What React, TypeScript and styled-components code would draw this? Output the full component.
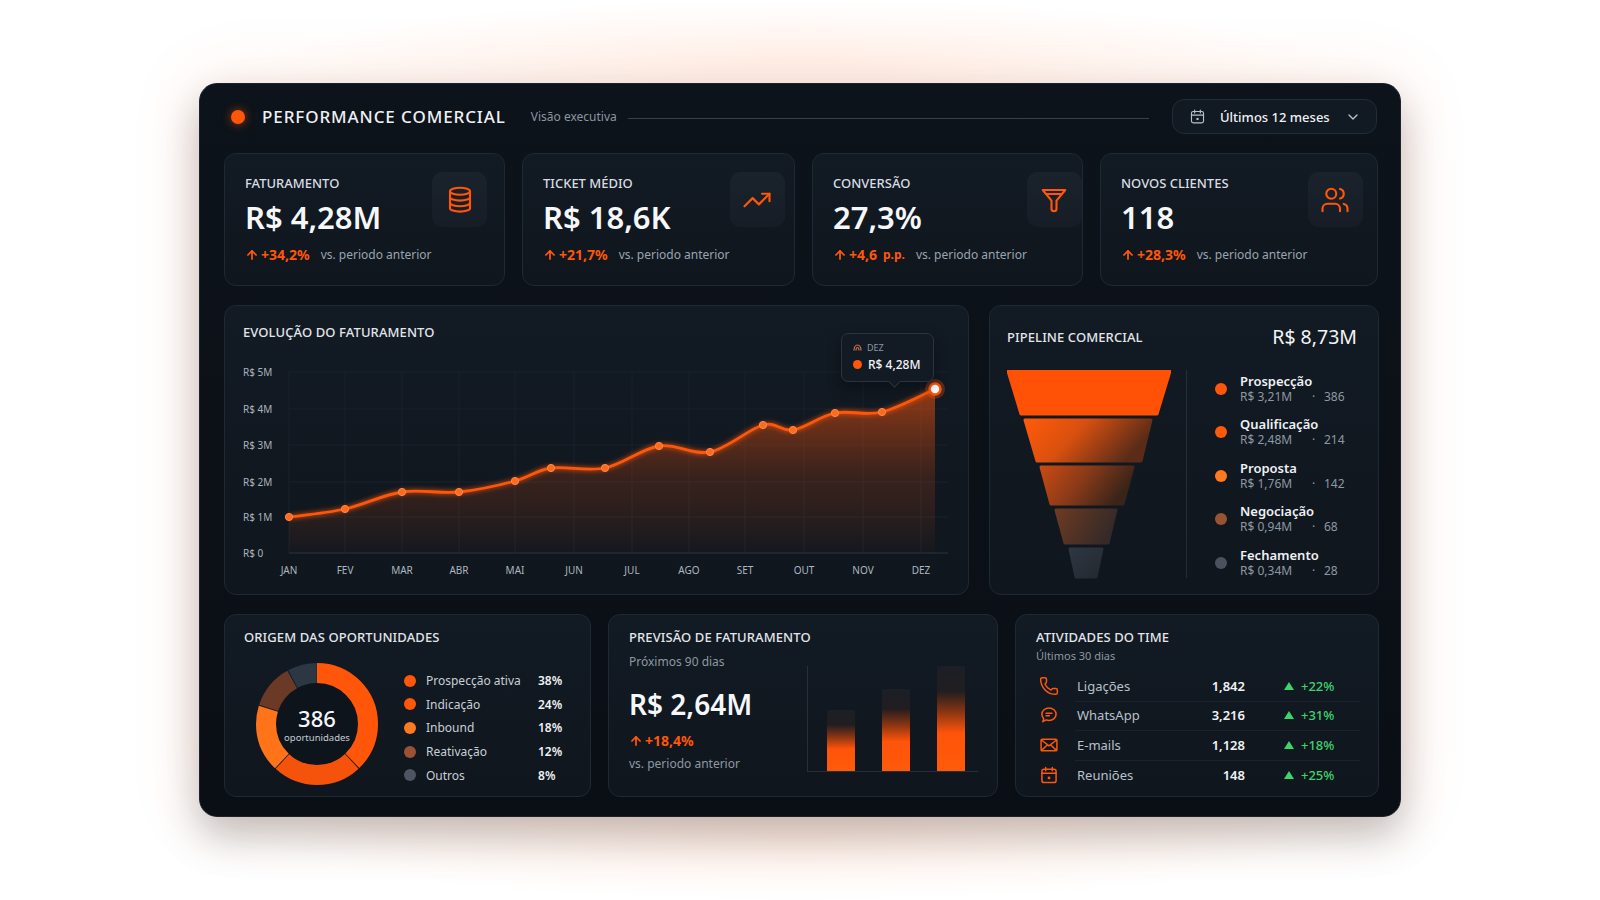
import React from "react";
import styled, { createGlobalStyle } from "styled-components";
import { TrendingUp, Users, ChevronDown, ArrowUp, Phone } from "lucide-react";

const ORANGE = "#ff560a";

const GlobalStyle = createGlobalStyle`
  * { box-sizing: border-box; }
  html, body { margin: 0; padding: 0; background: #ffffff; }
  body {
    font-family: "Noto Sans", "Open Sans", "Liberation Sans", sans-serif;
    -webkit-font-smoothing: antialiased;
  }
`;

const Page = styled.div`
  width: 1600px;
  height: 900px;
  display: flex;
  align-items: center;
  justify-content: center;
  overflow: hidden;
  background: radial-gradient(ellipse 760px 90px at 50% 62px, rgba(255, 150, 100, 0.13), transparent 70%),
    radial-gradient(ellipse 760px 90px at 50% 838px, rgba(255, 150, 100, 0.13), transparent 70%),
    #ffffff;
`;

const Panel = styled.main`
  width: 1202px;
  height: 734px;
  border-radius: 18px;
  border: 1px solid #1b222b;
  background: linear-gradient(180deg, #0d131a 0%, #0a0f15 100%);
  box-shadow: 0 0 70px rgba(255, 110, 50, 0.14), 0 18px 40px rgba(0, 0, 0, 0.25);
  padding: 15px 23px 20px 24px;
  display: flex;
  flex-direction: column;
  gap: 19px;
`;

/* ---------- header ---------- */
const Header = styled.header`
  display: flex;
  align-items: center;
  height: 35px;
  padding-left: 7px;
`;

const LiveDot = styled.span`
  width: 14px;
  height: 14px;
  border-radius: 50%;
  background: ${ORANGE};
  box-shadow: 0 0 10px rgba(255, 86, 10, 0.6);
  margin-right: 17px;
  flex-shrink: 0;
`;

const Title = styled.h1`
  margin: 0;
  font-size: 17px;
  font-weight: 500;
  letter-spacing: 0.9px;
  color: #eef1f4;
  white-space: nowrap;
`;

const Caption = styled.span`
  margin-left: 25px;
  font-size: 12px;
  color: #8b96a2;
  white-space: nowrap;
`;

const Rule = styled.div`
  flex: 1;
  height: 1px;
  background: #36414d;
  margin: 4px 23px 0 11px;
`;

const RangePicker = styled.button`
  width: 205px;
  height: 35px;
  border-radius: 12px;
  border: 1px solid #222d3a;
  background: #111922;
  display: flex;
  align-items: center;
  padding: 0 15px 0 16px;
  gap: 14px;
  color: #eef1f4;
  font: 500 13px "Noto Sans", sans-serif;
  span { flex: 1; text-align: left; }
`;

/* ---------- cards ---------- */
const Card = styled.div`
  position: relative;
  background: linear-gradient(180deg, #121a23 0%, #0f161e 100%);
  border: 1px solid #1e2934;
  border-radius: 12px;
`;

const CardTitle = styled.div`
  font-size: 13px;
  line-height: 18px;
  font-weight: 500;
  color: #e2e6ea;
  letter-spacing: 0.1px;
  white-space: nowrap;
`;

const Muted = styled.div<{ $size?: number }>`
  font-size: ${(p) => p.$size ?? 12}px;
  line-height: 16px;
  color: #8e98a3;
  white-space: nowrap;
`;

/* ---------- KPI row ---------- */
const KpiGrid = styled.section`
  display: grid;
  grid-template-columns: 281px 273px 271px 278px;
  gap: 17px;
  height: 133px;
`;

const KpiCard = styled(Card)`
  display: flex;
  justify-content: space-between;
  padding: 20px 17px 0 20px;
`;

const KpiLabel = styled.div`
  font-size: 13px;
  line-height: 18px;
  font-weight: 500;
  color: #d8dde3;
`;

const KpiValue = styled.div`
  margin-top: 6px;
  font-size: 31px;
  line-height: 38px;
  font-weight: 600;
  color: #f5f7fa;
`;

const KpiDelta = styled.div`
  margin-top: 9px;
  display: flex;
  align-items: center;
  font-size: 12px;
  line-height: 20px;
  color: #9aa4af;
  white-space: nowrap;
`;

const DeltaValue = styled.span`
  display: inline-flex;
  align-items: center;
  gap: 2px;
  color: ${ORANGE};
  font-weight: 700;
  font-size: 14px;
  margin-right: 11px;
  small { font-size: 12px; margin-left: 4px; }
`;

const IconBox = styled.div`
  width: 55px;
  height: 55px;
  margin-top: -2px;
  border-radius: 11px;
  background: linear-gradient(180deg, #1a222c, #161d26);
  display: flex;
  align-items: center;
  justify-content: center;
  color: ${ORANGE};
  flex-shrink: 0;
`;

/* ---------- middle row ---------- */
const MiddleRow = styled.section`
  display: grid;
  grid-template-columns: 745px 390px;
  gap: 20px;
  height: 291px;
`;

const ChartCard = styled(Card)`
  padding: 17px 20px 0 18px;
`;

const ChartSvg = styled.svg`
  display: block;
  margin-top: 11px;
  overflow: visible;
`;

const Tooltip = styled.div`
  position: absolute;
  left: 616px;
  top: 27px;
  width: 93px;
  height: 49px;
  border-radius: 7px;
  background: #121a23;
  border: 1px solid #2a3440;
  padding: 7px 0 0 11px;
  box-shadow: 0 6px 14px rgba(0, 0, 0, 0.35);
  &::after {
    content: "";
    position: absolute;
    left: 48px;
    bottom: -5px;
    width: 8px;
    height: 8px;
    background: #121a23;
    border-right: 1px solid #2a3440;
    border-bottom: 1px solid #2a3440;
    transform: rotate(45deg);
  }
`;

const TipMonth = styled.div`
  display: flex;
  align-items: center;
  gap: 5px;
  font-size: 9px;
  line-height: 13px;
  color: #8c96a1;
`;

const TipValue = styled.div`
  display: flex;
  align-items: center;
  gap: 6px;
  margin-top: 2px;
  font-size: 12px;
  line-height: 18px;
  font-weight: 500;
  color: #f2f4f7;
  &::before {
    content: "";
    width: 9px;
    height: 9px;
    border-radius: 50%;
    background: ${ORANGE};
  }
`;

const PipelineCard = styled(Card)`
  padding: 15px 21px 0 17px;
`;

const PipelineHead = styled.div`
  display: flex;
  justify-content: space-between;
  align-items: center;
  height: 32px;
`;

const PipelineTotal = styled.div`
  font-size: 19.5px;
  font-weight: 400;
  color: #f2f4f7;
`;

const PipelineBody = styled.div`
  display: flex;
  margin-top: 17px;
`;

const Divider = styled.div`
  width: 1px;
  height: 208px;
  background: #242e39;
  margin: 0 28px 0 15px;
`;

const StageList = styled.ul`
  list-style: none;
  margin: 0;
  padding: 3px 0 0;
  display: flex;
  flex-direction: column;
  gap: 11.5px;
`;

const StageItem = styled.li`
  display: grid;
  grid-template-columns: 12px 1fr;
  column-gap: 13px;
  align-items: center;
`;

const Bullet = styled.span<{ $color: string }>`
  width: 12px;
  height: 12px;
  border-radius: 50%;
  background: ${(p) => p.$color};
`;

const StageName = styled.div`
  font-size: 13px;
  line-height: 16px;
  font-weight: 600;
  color: #eef1f4;
`;

const StageValue = styled.div`
  display: grid;
  grid-template-columns: 72px 12px auto;
  font-size: 12px;
  line-height: 16px;
  color: #8e98a3;
`;

/* ---------- bottom row ---------- */
const BottomRow = styled.section`
  display: grid;
  grid-template-columns: 367px 390px 364px;
  gap: 17px;
  height: 182px;
`;

const OriginCard = styled(Card)`
  padding: 13px 20px 0 19px;
`;

const OriginBody = styled.div`
  display: flex;
  align-items: flex-start;
  margin-top: 17px;
  padding-left: 12px;
`;

const Donut = styled.div`
  display: grid;
  width: 122px;
  height: 122px;
  flex-shrink: 0;
  & > * { grid-area: 1 / 1; }
`;

const DonutCenter = styled.div`
  display: flex;
  flex-direction: column;
  align-items: center;
  justify-content: center;
  strong { font-size: 22px; line-height: 26px; font-weight: 500; color: #f5f7fa; }
  span { font-size: 9.5px; line-height: 13px; color: #c6ccd3; }
`;

const OriginList = styled.ul`
  list-style: none;
  margin: 6px 0 0 26px;
  padding: 0;
  width: 160px;
`;

const OriginItem = styled.li`
  display: grid;
  grid-template-columns: 12px 1fr auto;
  column-gap: 10px;
  align-items: center;
  height: 23.6px;
  font-size: 12px;
  color: #c9cfd6;
  b { font-weight: 600; color: #eef1f4; width: 26px; }
`;

const ForecastCard = styled(Card)`
  display: flex;
  padding: 13px 19px 24px 20px;
`;

const ForecastStats = styled.div`
  flex: 0 0 178px;
  min-width: 0;
`;

const ForecastValue = styled.div`
  margin-top: 17px;
  font-size: 28px;
  line-height: 34px;
  font-weight: 600;
  color: #f5f7fa;
`;

const ForecastDelta = styled(DeltaValue)`
  margin-top: 10px;
  line-height: 20px;
  display: flex;
`;

const BarChart = styled.div`
  align-self: flex-end;
  width: 173px;
  height: 106px;
  border-left: 1px solid #25303b;
  border-bottom: 1px solid #25303b;
  display: flex;
  align-items: flex-end;
  gap: 27px;
  padding-left: 19px;
`;

const Bar = styled.div<{ $h: number }>`
  width: 28px;
  height: ${(p) => p.$h}px;
  border-radius: 2px 2px 0 0;
  background: linear-gradient(
    180deg,
    #1b1f27 0%,
    #211d1f 24%,
    #8a3512 44%,
    #ff540a 64%,
    #ff5a0a 100%
  );
`;

const ActivityCard = styled(Card)`
  padding: 13px 20px 0 20px;
`;

const ActivityList = styled.div`
  margin-top: 7px;
`;

const ActivityRow = styled.div<{ $divided?: boolean }>`
  position: relative;
  display: grid;
  grid-template-columns: 41px 109px 59px 1fr;
  align-items: center;
  height: 29.6px;
  font-size: 13px;
  &::before {
    content: "";
    display: ${(p) => (p.$divided ? "block" : "none")};
    position: absolute;
    left: 39px;
    right: -2px;
    top: 0;
    height: 1px;
    background: #1a232d;
  }
`;

const ActivityIcon = styled.span`
  display: flex;
  margin-left: 3px;
  color: ${ORANGE};
`;

const ActivityLabel = styled.span`
  color: #b8c0c9;
`;

const ActivityCount = styled.span`
  text-align: right;
  font-weight: 600;
  color: #f1f3f6;
`;

const ActivityTrend = styled.span`
  display: flex;
  align-items: center;
  gap: 7px;
  padding-left: 39px;
  color: #3fd36b;
  font-weight: 500;
`;

/* ---------- icons ---------- */
type IconProps = { size?: number; color?: string; sw?: number };

const DatabaseIcon = ({ size = 30 }: IconProps) => (
  <svg width={size} height={size} viewBox="0 0 24 24" fill="none" stroke="currentColor" strokeWidth={1.7} strokeLinecap="round">
    <ellipse cx="12" cy="5" rx="8" ry="2.8" />
    <path d="M4 5v13.5c0 1.55 3.6 2.8 8 2.8s8-1.25 8-2.8V5" />
    <path d="M4 9.7c0 1.55 3.6 2.8 8 2.8s8-1.25 8-2.8" />
    <path d="M4 14.2c0 1.55 3.6 2.8 8 2.8s8-1.25 8-2.8" />
  </svg>
);

const FunnelIcon = ({ size = 30 }: IconProps) => (
  <svg width={size} height={size} viewBox="0 0 24 24" fill="none" stroke="currentColor" strokeWidth={1.7} strokeLinejoin="round" strokeLinecap="round">
    <path d="M3 4h18l-7 8.5V19a2 2 0 0 1-4 0v-6.5L3 4z" />
    <path d="M5.6 7.2h12.8" />
  </svg>
);

const CalendarIcon = ({ size = 20, color = "currentColor", sw = 1.8 }: IconProps) => (
  <svg width={size} height={size} viewBox="0 0 24 24" fill="none" stroke={color} strokeWidth={sw} strokeLinecap="round">
    <rect x="3.5" y="5" width="17" height="16" rx="2.5" />
    <path d="M8 3v4M16 3v4M3.5 10h17" />
    <rect x="10.5" y="14" width="3" height="3" fill={color} stroke="none" />
  </svg>
);

const ChatIcon = ({ size = 20 }: IconProps) => (
  <svg width={size} height={size} viewBox="0 0 24 24" fill="none" stroke="currentColor" strokeWidth={1.8} strokeLinejoin="round" strokeLinecap="round">
    <path d="M12 3.5c4.7 0 8.5 3.3 8.5 7.5s-3.8 7.5-8.5 7.5c-1.2 0-2.3-.2-3.3-.6L4.5 20l1.2-3.6C4.3 15 3.5 13.1 3.5 11c0-4.2 3.8-7.5 8.5-7.5z" />
    <path d="M8.5 10h7M8.5 13h4" />
  </svg>
);

const MailIcon = ({ size = 20 }: IconProps) => (
  <svg width={size} height={size} viewBox="0 0 24 24" fill="none" stroke="currentColor" strokeWidth={1.8} strokeLinejoin="round" strokeLinecap="round">
    <rect x="2.5" y="5" width="19" height="14" rx="1.5" />
    <path d="M3 6l9 7 9-7M3 18.5l7-6.5M21 18.5l-7-6.5" />
  </svg>
);

const Triangle = () => (
  <svg width="10" height="8" viewBox="0 0 10 8">
    <path d="M5 0L10 8H0z" fill="#3fd36b" />
  </svg>
);

/* ---------- data ---------- */
const kpis = [
  { label: "FATURAMENTO", value: "R$ 4,28M", delta: "+34,2%", icon: <DatabaseIcon /> },
  { label: "TICKET MÉDIO", value: "R$ 18,6K", delta: "+21,7%", icon: <TrendingUp size={30} strokeWidth={1.7} /> },
  { label: "CONVERSÃO", value: "27,3%", delta: "+4,6", unit: "p.p.", icon: <FunnelIcon /> },
  { label: "NOVOS CLIENTES", value: "118", delta: "+28,3%", icon: <Users size={30} strokeWidth={1.7} /> },
];

type Pt = [number, number];
const points: Pt[] = [
  [46, 165], [102, 157], [159, 140], [216, 140], [272, 129], [308, 116], [362, 116],
  [416, 94], [467, 100], [520, 73], [550, 78], [592, 61], [639, 60], [692, 37],
];
const yTicks = [
  { label: "R$ 5M", y: 20 }, { label: "R$ 4M", y: 57 }, { label: "R$ 3M", y: 93 },
  { label: "R$ 2M", y: 130 }, { label: "R$ 1M", y: 165 }, { label: "R$ 0", y: 201 },
];
const months: [string, number][] = [
  ["JAN", 46], ["FEV", 102], ["MAR", 159], ["ABR", 216], ["MAI", 272], ["JUN", 331],
  ["JUL", 389], ["AGO", 446], ["SET", 502], ["OUT", 561], ["NOV", 620], ["DEZ", 678],
];

const stages = [
  { name: "Prospecção", value: "R$ 3,21M", count: 386, color: "#ff560a" },
  { name: "Qualificação", value: "R$ 2,48M", count: 214, color: "#ff5a0c" },
  { name: "Proposta", value: "R$ 1,76M", count: 142, color: "#ff7a1f" },
  { name: "Negociação", value: "R$ 0,94M", count: 68, color: "#9a5233" },
  { name: "Fechamento", value: "R$ 0,34M", count: 28, color: "#4a525d" },
];

const funnel = [
  { d: "M1 1H163L150 44H14Z", fill: "#ff5207" },
  { d: "M18 50H144L134 91H30Z", fill: "url(#seg2)" },
  { d: "M34 97H126L116 134H44Z", fill: "url(#seg3)" },
  { d: "M49 140H109L101 173H58Z", fill: "url(#seg4)" },
  { d: "M63 179H95L89 207H69Z", fill: "url(#seg5)" },
];

const origins = [
  { name: "Prospecção ativa", pct: 38, color: "#ff560a", ring: "#ff560a" },
  { name: "Indicação", pct: 24, color: "#ff560a", ring: "#f5520b" },
  { name: "Inbound", pct: 18, color: "#ff7a1f", ring: "#ff7418" },
  { name: "Reativação", pct: 12, color: "#9a5233", ring: "#6b3a27" },
  { name: "Outros", pct: 8, color: "#4c5561", ring: "#2c3744" },
];

const activities = [
  { label: "Ligações", count: "1,842", delta: "+22%", icon: <Phone size={20} strokeWidth={1.8} /> },
  { label: "WhatsApp", count: "3,216", delta: "+31%", icon: <ChatIcon /> },
  { label: "E-mails", count: "1,128", delta: "+18%", icon: <MailIcon /> },
  { label: "Reuniões", count: "148", delta: "+25%", icon: <CalendarIcon /> },
];

const smoothPath = (pts: Pt[]) => {
  let d = `M${pts[0][0]},${pts[0][1]}`;
  for (let i = 0; i < pts.length - 1; i++) {
    const p0 = pts[i - 1] || pts[i];
    const p1 = pts[i];
    const p2 = pts[i + 1];
    const p3 = pts[i + 2] || p2;
    const c1x = p1[0] + (p2[0] - p0[0]) / 6;
    const c1y = p1[1] + (p2[1] - p0[1]) / 6;
    const c2x = p2[0] - (p3[0] - p1[0]) / 6;
    const c2y = p2[1] - (p3[1] - p1[1]) / 6;
    d += ` C${c1x.toFixed(1)},${c1y.toFixed(1)} ${c2x.toFixed(1)},${c2y.toFixed(1)} ${p2[0]},${p2[1]}`;
  }
  return d;
};

/* ---------- parts ---------- */
const RevenueChart = () => {
  const line = smoothPath(points);
  const last = points[points.length - 1];
  const area = `${line} L${last[0]},201 L46,201 Z`;
  return (
    <ChartSvg width={705} height={235} viewBox="0 0 705 235">
      <defs>
        <linearGradient id="areaFill" x1="0" y1="37" x2="0" y2="201" gradientUnits="userSpaceOnUse">
          <stop offset="0" stopColor="#ff560a" stopOpacity="0.55" />
          <stop offset="0.55" stopColor="#c2440f" stopOpacity="0.22" />
          <stop offset="1" stopColor="#ff560a" stopOpacity="0.02" />
        </linearGradient>
        <filter id="glow" x="-20%" y="-50%" width="140%" height="200%">
          <feGaussianBlur stdDeviation="2.5" result="b" />
          <feMerge>
            <feMergeNode in="b" />
            <feMergeNode in="SourceGraphic" />
          </feMerge>
        </filter>
      </defs>
      {yTicks.map((t) => (
        <g key={t.label}>
          <line x1={46} x2={705} y1={t.y} y2={t.y} stroke={t.y === 201 ? "#2a3541" : "#19222c"} />
          <text x={0} y={t.y + 3.5} fontSize="10" fill="#aab2bc">{t.label}</text>
        </g>
      ))}
      {months.map(([m, x]) => (
        <g key={m}>
          <line x1={x} x2={x} y1={20} y2={201} stroke="#19222c" />
          <text x={x} y={222} fontSize="10" fill="#aeb6bf" textAnchor="middle">{m}</text>
        </g>
      ))}
      <path d={area} fill="url(#areaFill)" />
      <path d={line} fill="none" stroke={ORANGE} strokeWidth={2.8} filter="url(#glow)" />
      {points.slice(0, -1).map(([x, y]) => (
        <circle key={x} cx={x} cy={y} r={3.6} fill="#ff6a1c" stroke="#ff8a4a" strokeWidth={1} />
      ))}
      <circle cx={last[0]} cy={last[1]} r={10} fill={ORANGE} opacity={0.3} />
      <circle cx={last[0]} cy={last[1]} r={5.5} fill="#ffffff" stroke={ORANGE} strokeWidth={2.5} />
    </ChartSvg>
  );
};

const FunnelGraphic = () => (
  <svg width={164} height={210} viewBox="0 0 164 210" style={{ flexShrink: 0 }}>
    <defs>
      <linearGradient id="seg2" x1="0" x2="1" y1="0" y2="0.3">
        <stop offset="0" stopColor="#ff5a0a" />
        <stop offset="0.45" stopColor="#d9500f" />
        <stop offset="1" stopColor="#5a2c18" />
      </linearGradient>
      <linearGradient id="seg3" x1="0" x2="1" y1="0" y2="0.3">
        <stop offset="0" stopColor="#c84a14" />
        <stop offset="0.5" stopColor="#8a3a18" />
        <stop offset="1" stopColor="#3a2419" />
      </linearGradient>
      <linearGradient id="seg4" x1="0" x2="1" y1="0" y2="0.3">
        <stop offset="0" stopColor="#6d3a22" />
        <stop offset="1" stopColor="#352a27" />
      </linearGradient>
      <linearGradient id="seg5" x1="0" x2="1" y1="0" y2="1">
        <stop offset="0" stopColor="#2e3641" />
        <stop offset="1" stopColor="#222931" />
      </linearGradient>
    </defs>
    {funnel.map((s) => (
      <path key={s.d} d={s.d} fill={s.fill} stroke={s.fill} strokeWidth={3} strokeLinejoin="round" />
    ))}
  </svg>
);

const OriginDonut = () => {
  const r = 51;
  const c = 2 * Math.PI * r;
  let acc = 0;
  return (
    <Donut>
      <svg width={122} height={122} viewBox="0 0 122 122">
        <circle cx={61} cy={61} r={41} fill="#0d141b" />
        <g transform="rotate(-90 61 61)">
          {origins.map((o) => {
            const len = (o.pct / 100) * c;
            const seg = (
              <circle
                key={o.name}
                cx={61}
                cy={61}
                r={r}
                fill="none"
                stroke={o.ring}
                strokeWidth={20}
                strokeDasharray={`${len - 0.8} ${c}`}
                strokeDashoffset={-acc}
              />
            );
            acc += len;
            return seg;
          })}
        </g>
      </svg>
      <DonutCenter>
        <strong>386</strong>
        <span>oportunidades</span>
      </DonutCenter>
    </Donut>
  );
};

const TipGlyph = () => (
  <svg width="9" height="7" viewBox="0 0 9 7" fill="none" stroke="#d9734a" strokeWidth="1.2">
    <path d="M1 6.5C1 3.5 2.5 1 4.5 1S8 3.5 8 6.5M3 6.5c0-1.6.6-3 1.5-3S6 4.9 6 6.5" />
  </svg>
);

const App = () => {
  return (
    <Page>
      <GlobalStyle />
      <Panel>
        <Header>
          <LiveDot />
          <Title>PERFORMANCE COMERCIAL</Title>
          <Caption>Visão executiva</Caption>
          <Rule />
          <RangePicker type="button">
            <CalendarIcon size={17} color="#b9c1ca" sw={1.6} />
            <span>Últimos 12 meses</span>
            <ChevronDown size={16} color="#b9c1ca" />
          </RangePicker>
        </Header>

        <KpiGrid>
          {kpis.map((k) => (
            <KpiCard key={k.label}>
              <div>
                <KpiLabel>{k.label}</KpiLabel>
                <KpiValue>{k.value}</KpiValue>
                <KpiDelta>
                  <DeltaValue>
                    <ArrowUp size={14} strokeWidth={3} />
                    {k.delta}
                    {k.unit && <small>{k.unit}</small>}
                  </DeltaValue>
                  vs. periodo anterior
                </KpiDelta>
              </div>
              <IconBox>{k.icon}</IconBox>
            </KpiCard>
          ))}
        </KpiGrid>

        <MiddleRow>
          <ChartCard>
            <CardTitle>EVOLUÇÃO DO FATURAMENTO</CardTitle>
            <RevenueChart />
            <Tooltip>
              <TipMonth>
                <TipGlyph />
                DEZ
              </TipMonth>
              <TipValue>R$ 4,28M</TipValue>
            </Tooltip>
          </ChartCard>

          <PipelineCard>
            <PipelineHead>
              <CardTitle>PIPELINE COMERCIAL</CardTitle>
              <PipelineTotal>R$ 8,73M</PipelineTotal>
            </PipelineHead>
            <PipelineBody>
              <FunnelGraphic />
              <Divider />
              <StageList>
                {stages.map((s) => (
                  <StageItem key={s.name}>
                    <Bullet $color={s.color} />
                    <div>
                      <StageName>{s.name}</StageName>
                      <StageValue>
                        <span>{s.value}</span>
                        <span>·</span>
                        <span>{s.count}</span>
                      </StageValue>
                    </div>
                  </StageItem>
                ))}
              </StageList>
            </PipelineBody>
          </PipelineCard>
        </MiddleRow>

        <BottomRow>
          <OriginCard>
            <CardTitle>ORIGEM DAS OPORTUNIDADES</CardTitle>
            <OriginBody>
              <OriginDonut />
              <OriginList>
                {origins.map((o) => (
                  <OriginItem key={o.name}>
                    <Bullet $color={o.color} />
                    <span>{o.name}</span>
                    <b>{o.pct}%</b>
                  </OriginItem>
                ))}
              </OriginList>
            </OriginBody>
          </OriginCard>

          <ForecastCard>
            <ForecastStats>
              <CardTitle>PREVISÃO DE FATURAMENTO</CardTitle>
              <Muted style={{ marginTop: 8 }}>Próximos 90 dias</Muted>
              <ForecastValue>R$ 2,64M</ForecastValue>
              <ForecastDelta>
                <ArrowUp size={14} strokeWidth={3} />
                +18,4%
              </ForecastDelta>
              <Muted style={{ marginTop: 5 }}>vs. periodo anterior</Muted>
            </ForecastStats>
            <BarChart>
              <Bar $h={61} />
              <Bar $h={82} />
              <Bar $h={105} />
            </BarChart>
          </ForecastCard>

          <ActivityCard>
            <CardTitle>ATIVIDADES DO TIME</CardTitle>
            <Muted $size={11} style={{ marginTop: 2 }}>Últimos 30 dias</Muted>
            <ActivityList>
              {activities.map((a, i) => (
                <ActivityRow key={a.label} $divided={i > 0}>
                  <ActivityIcon>{a.icon}</ActivityIcon>
                  <ActivityLabel>{a.label}</ActivityLabel>
                  <ActivityCount>{a.count}</ActivityCount>
                  <ActivityTrend>
                    <Triangle />
                    {a.delta}
                  </ActivityTrend>
                </ActivityRow>
              ))}
            </ActivityList>
          </ActivityCard>
        </BottomRow>
      </Panel>
    </Page>
  );
};

export default App;
